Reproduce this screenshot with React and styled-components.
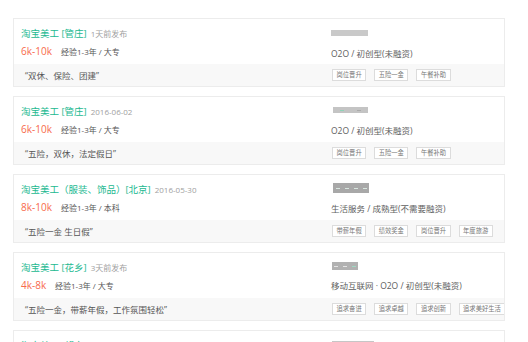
import React from 'react'
import styled, { createGlobalStyle } from 'styled-components'

const GlobalStyle = createGlobalStyle`
  html, body {
    margin: 0;
    padding: 0;
    background: #ffffff;
    overflow: hidden;
  }
  body {
    font-family: "Open Sans", "Noto Sans CJK SC", sans-serif;
  }
`

const Page = styled.div`
  padding: 18px 0 0 13px;
`

const Card = styled.div`
  width: 490px;
  border: 1px solid #ececec;
  margin-bottom: 9px;
  background: #fff;
`

const Top = styled.div`
  display: grid;
  grid-template-columns: 317px 1fr;
  height: 45px;
`

const Left = styled.div`
  display: flex;
  flex-direction: column;
  padding: 8px 0 0 7px;
  gap: 5px;
`

const TitleRow = styled.div`
  display: flex;
  align-items: baseline;
  gap: 4px;
  height: 13px;
  line-height: 13px;
  white-space: nowrap;
`

const Title = styled.span`
  color: #22b990;
  font-size: 9.5px;
`

const Date = styled.span`
  color: #a0a0a0;
  font-size: 8px;
`

const SalaryRow = styled.div`
  display: flex;
  align-items: baseline;
  height: 13px;
  line-height: 13px;
  white-space: nowrap;
`

const Salary = styled.span`
  color: #f76a4c;
  font-size: 10px;
  width: ${p => p.$w}px;
`

const Exp = styled.span`
  color: #555;
  font-size: 8px;
`

const Right = styled.div`
  display: flex;
  flex-direction: column;
  padding-top: ${p => p.$top}px;
`

const Company = styled.div`
  width: ${p => p.$w}px;
  height: ${p => p.$h}px;
  margin-left: ${p => p.$x}px;
  background: ${p => p.$bg};
  filter: blur(0.6px);
  display: flex;
  align-items: center;
  justify-content: space-around;
`

const Dot = styled.span`
  width: 4px;
  height: 1px;
  background: ${p => p.$c};
`

const Industry = styled.div`
  margin-top: ${p => p.$gap}px;
  color: #606060;
  font-size: 8.5px;
  line-height: 13px;
  white-space: nowrap;
`

const Footer = styled.div`
  display: grid;
  grid-template-columns: 317px 1fr;
  align-items: center;
  height: 22px;
  background: #f8f8f8;
  overflow: hidden;
`

const Quote = styled.div`
  padding-left: 11px;
  color: #555;
  font-size: 8.5px;
  white-space: nowrap;
`

const Tags = styled.div`
  display: flex;
  gap: 8px;
  padding-left: 1px;
`

const Tag = styled.span`
  flex: none;
  height: 10px;
  line-height: 10px;
  padding: 0 3.5px;
  border: 1px solid #dcdcdc;
  background: #fff;
  color: #777;
  font-size: 6.3px;
  white-space: nowrap;
`

const jobs = [
  {
    title: '淘宝美工 [管庄]', date: '1天前发布', salary: '6k-10k', sw: 40, exp: '经验1-3年 / 大专',
    company: { w: 37, h: 6, x: 0, bg: '#c9c9c9', dots: [], top: 11, gap: 11 },
    industry: 'O2O / 初创型(未融资)', quote: '“双休、保险、团建”',
    tags: ['岗位晋升', '五险一金', '午餐补助'],
  },
  {
    title: '淘宝美工 [管庄]', date: '2016-06-02', salary: '6k-10k', sw: 40, exp: '经验1-3年 / 大专',
    company: { w: 35, h: 6, x: 2, bg: '#c4c4c4', dots: ['#8fd3b8', '#aaa'], top: 10, gap: 11 },
    industry: 'O2O / 初创型(未融资)', quote: '“五险，双休，法定假日”',
    tags: ['岗位晋升', '五险一金', '午餐补助'],
  },
  {
    title: '淘宝美工（服装、饰品）[北京]', date: '2016-05-30', salary: '8k-10k', sw: 40, exp: '经验1-3年 / 本科',
    company: { w: 36, h: 10, x: 2, bg: '#a8a8a8', dots: ['#d8e6df', '#d8e6df', '#d8e6df', '#d8e6df'], top: 8, gap: 9 },
    industry: '生活服务 / 成熟型(不需要融资)', quote: '“五险一金 生日假”',
    tags: ['带薪年假', '绩效奖金', '岗位晋升', '年度旅游'],
  },
  {
    title: '淘宝美工 [花乡]', date: '3天前发布', salary: '4k-8k', sw: 34, exp: '经验1-3年 / 大专',
    company: { w: 26, h: 8, x: 1, bg: '#b1b1b1', dots: ['#e4e4e4', '#e4e4e4', '#9fd9c2'], top: 9, gap: 9 },
    industry: '移动互联网 · O2O / 初创型(未融资)', quote: '“五险一金，带薪年假，工作氛围轻松”',
    tags: ['追求奋进', '追求卓越', '追求创新', '追求美好生活'],
  },
  {
    title: '淘宝美工 [望京]', date: '2016-05-28', salary: '6k-8k', sw: 34, exp: '经验1-3年 / 大专',
    company: { w: 42, h: 6, x: 1, bg: '#c6c6c6', dots: [], top: 10, gap: 11 },
    industry: '电子商务 / 成长型(A轮)', quote: '“五险一金，周末双休”',
    tags: ['五险一金', '周末双休'],
  },
]

function JobCard({ job }) {
  const c = job.company
  return (
    <Card>
      <Top>
        <Left>
          <TitleRow>
            <Title>{job.title}</Title>
            <Date>{job.date}</Date>
          </TitleRow>
          <SalaryRow>
            <Salary $w={job.sw}>{job.salary}</Salary>
            <Exp>{job.exp}</Exp>
          </SalaryRow>
        </Left>
        <Right $top={c.top}>
          <Company $w={c.w} $h={c.h} $x={c.x} $bg={c.bg}>
            {c.dots.map((d, i) => <Dot key={i} $c={d} />)}
          </Company>
          <Industry $gap={c.gap}>{job.industry}</Industry>
        </Right>
      </Top>
      <Footer>
        <Quote>{job.quote}</Quote>
        <Tags>
          {job.tags.map(t => <Tag key={t}>{t}</Tag>)}
        </Tags>
      </Footer>
    </Card>
  )
}

function App() {
  return (
    <Page>
      <GlobalStyle />
      {jobs.map((job, i) => <JobCard key={i} job={job} />)}
    </Page>
  )
}

export default App
